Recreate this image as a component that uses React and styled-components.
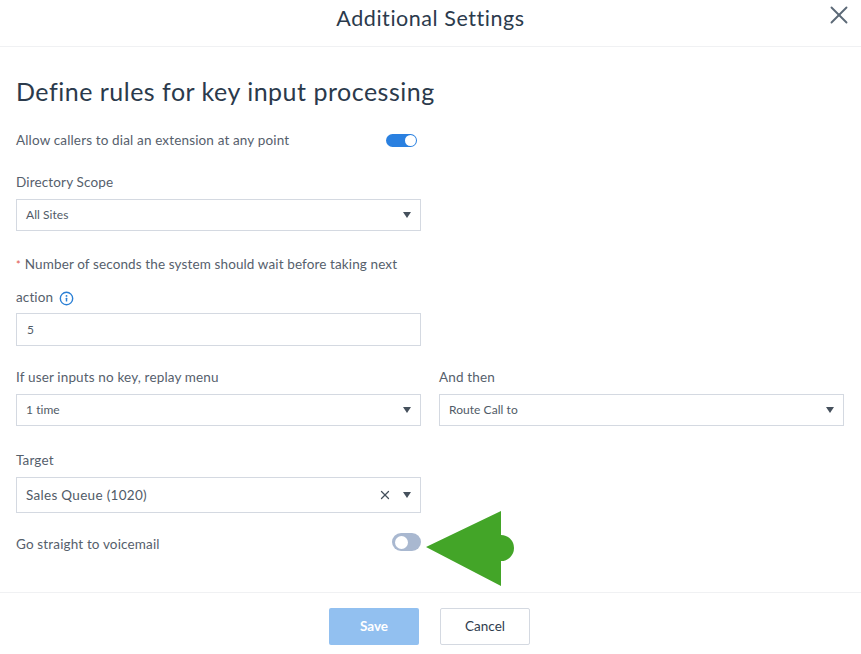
import React from 'react'
import styled, { createGlobalStyle } from 'styled-components'
import { X } from 'lucide-react'

const GlobalStyle = createGlobalStyle`
	html, body {
		margin: 0;
		padding: 0;
		background: #fff;
		font-family: 'Lato', 'Open Sans', sans-serif;
	}
`

const App = () => {
	return (
		<>
			<GlobalStyle />
			<S.Modal>
				<S.Header>
					<S.HeaderTitle>Additional Settings</S.HeaderTitle>
					<S.Close><X size={30} strokeWidth={1.5} /></S.Close>
				</S.Header>
				<S.Body>
					<S.Heading>Define rules for key input processing</S.Heading>
					<S.ToggleRow $top={22}>
						<S.Label>Allow callers to dial an extension at any point</S.Label>
						<S.Toggle $on />
					</S.ToggleRow>
					<S.Field $top={22}>
						<S.Label>Directory Scope</S.Label>
						<S.Select>
							<S.Value>All Sites</S.Value>
							<S.Caret />
						</S.Select>
					</S.Field>
					<S.Field $top={17}>
						<S.LongLabel>
							Number of seconds the system should wait before taking next action
							<S.Info viewBox="0 0 16 16">
								<circle cx="8" cy="8" r="6.6" fill="none" stroke="#2a7fd5" strokeWidth="1.5" />
								<circle cx="8" cy="5.2" r="1" fill="#2a7fd5" />
								<rect x="7.2" y="7.2" width="1.6" height="4" rx="0.6" fill="#2a7fd5" />
							</S.Info>
						</S.LongLabel>
						<S.Input>5</S.Input>
					</S.Field>
					<S.Columns>
						<S.Field>
							<S.Label>If user inputs no key, replay menu</S.Label>
							<S.Select>
								<S.Value>1 time</S.Value>
								<S.Caret />
							</S.Select>
						</S.Field>
						<S.Field>
							<S.Label>And then</S.Label>
							<S.Select>
								<S.Value>Route Call to</S.Value>
								<S.Caret />
							</S.Select>
						</S.Field>
					</S.Columns>
					<S.Field $top={24}>
						<S.Label>Target</S.Label>
						<S.Select $tall>
							<S.Value $large>Sales Queue (1020)</S.Value>
							<S.Clear><X size={14} strokeWidth={2.2} /></S.Clear>
							<S.Caret />
						</S.Select>
					</S.Field>
					<S.ToggleRow $top={21}>
						<S.Label>Go straight to voicemail</S.Label>
						<S.Toggle />
					</S.ToggleRow>
				</S.Body>
				<S.Footer>
					<S.Save>Save</S.Save>
					<S.Cancel>Cancel</S.Cancel>
				</S.Footer>
				<S.Arrow viewBox="0 0 92 78">
					<path d="M0 36 L75 0 L75 24 A13 13 0 0 1 75 50 L75 75 Z" fill="#43a528" />
				</S.Arrow>
			</S.Modal>
		</>
	)
}

export default App

const S = {}

S.Modal = styled.div`
	position: relative;
	width: 861px;
	height: 654px;
	overflow: hidden;
	background: #fff;
	color: #2f3d4e;
`
S.Header = styled.header`
	position: relative;
	display: flex;
	align-items: center;
	justify-content: center;
	height: 47px;
	padding-bottom: 10px;
	box-sizing: border-box;
	border-bottom: 1px solid #f0f1f3;
`
S.HeaderTitle = styled.h1`
	margin: 0;
	font-size: 21.5px;
	font-weight: 400;
	line-height: 28px;
	letter-spacing: 0.55px;
	color: #2b3a4c;
`
S.Close = styled.div`
	position: absolute;
	top: 0;
	right: 7px;
	display: flex;
	color: #5c6977;
`
S.Body = styled.div`
	padding: 27px 16px 0;
	height: 545px;
	box-sizing: border-box;
`
S.Heading = styled.h2`
	margin: 0;
	font-size: 25px;
	font-weight: 400;
	line-height: 34px;
	letter-spacing: 0.5px;
	color: #2b3a4c;
`
S.ToggleRow = styled.div`
	display: flex;
	align-items: center;
	justify-content: space-between;
	width: 405px;
	height: 20px;
	margin-top: ${({ $top }) => $top}px;
`
S.Label = styled.label`
	display: block;
	font-size: 13.5px;
	line-height: 20px;
	letter-spacing: 0.15px;
	color: #56606c;
`
S.LongLabel = styled.label`
	display: block;
	width: 392px;
	margin-bottom: -1px;
	font-size: 13.5px;
	line-height: 33px;
	letter-spacing: 0.12px;
	color: #56606c;

	&::before {
		content: '*';
		display: inline-block;
		margin-right: 4px;
		color: #e0544a;
		font-size: 11px;
	}
`
S.Info = styled.svg`
	width: 15px;
	height: 15px;
	margin-left: 6px;
	vertical-align: -4px;
`
S.Toggle = styled.span`
	position: relative;
	display: block;
	width: ${({ $on }) => ($on ? 31 : 29)}px;
	height: ${({ $on }) => ($on ? 13 : 18)}px;
	border-radius: 9px;
	margin-right: ${({ $on }) => ($on ? 4 : 0)}px;
	margin-bottom: ${({ $on }) => ($on ? 0 : 4)}px;
	background: ${({ $on }) => ($on ? '#2a80e0' : '#a9b8d0')};

	&::after {
		content: '';
		position: absolute;
		top: ${({ $on }) => ($on ? 1 : 3)}px;
		${({ $on }) => ($on ? 'right: 1px' : 'left: 3px')};
		width: ${({ $on }) => ($on ? 11 : 13)}px;
		height: ${({ $on }) => ($on ? 11 : 13)}px;
		border-radius: 50%;
		background: #fff;
	}
`
S.Field = styled.div`
	width: 405px;
	margin-top: ${({ $top }) => $top ?? 0}px;
`
S.Select = styled.div`
	display: flex;
	align-items: center;
	box-sizing: border-box;
	height: ${({ $tall }) => ($tall ? 36 : 32)}px;
	margin-top: 7px;
	padding: 0 9px;
	border: 1px solid #d4d9e1;
`
S.Value = styled.span`
	flex: 1;
	margin-bottom: ${({ $large }) => ($large ? 0 : 2)}px;
	font-size: ${({ $large }) => ($large ? 13.5 : 12)}px;
	letter-spacing: ${({ $large }) => ($large ? 0.3 : 0.05)}px;
	color: #515b67;
`
S.Caret = styled.span`
	width: 0;
	height: 0;
	border-left: 4.5px solid transparent;
	border-right: 4.5px solid transparent;
	border-top: 6px solid #45505c;
`
S.Clear = styled.span`
	display: flex;
	margin-right: 11px;
	color: #45505c;
`
S.Input = styled.div`
	display: flex;
	align-items: center;
	box-sizing: border-box;
	height: 33px;
	padding: 0 10px;
	border: 1px solid #d4d9e1;
	font-size: 12px;
	color: #515b67;
`
S.Columns = styled.div`
	display: grid;
	grid-template-columns: 405px 405px;
	column-gap: 18px;
	margin-top: 21px;
`
S.Footer = styled.footer`
	display: flex;
	justify-content: center;
	gap: 21px;
	padding: 15px 2px 0 0;
	border-top: 1px solid #f0f1f3;
`
S.Save = styled.button`
	width: 90px;
	height: 37px;
	padding: 0 0 2px;
	border: 0;
	border-radius: 2px;
	background: #92c0f0;
	color: #fff;
	font: 700 13.5px 'Lato', sans-serif;
`
S.Cancel = styled.button`
	width: 90px;
	height: 37px;
	padding: 0 0 2px;
	border: 1px solid #d4d9e1;
	border-radius: 2px;
	background: #fff;
	color: #2f3d4e;
	font: 400 13.5px 'Lato', sans-serif;
`
S.Arrow = styled.svg`
	position: absolute;
	left: 426px;
	top: 511px;
	width: 92px;
	height: 78px;
`
